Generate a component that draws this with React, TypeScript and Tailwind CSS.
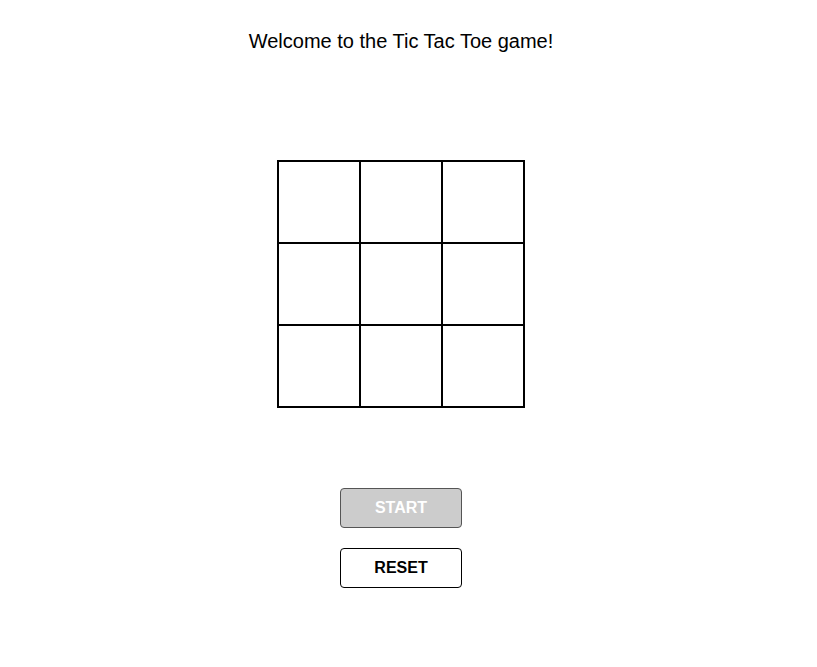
import { useState } from 'react';

const CELLS = Array.from({ length: 9 }, (_, i) => i);

export default function App() {
  const [board, setBoard] = useState<Array<string | null>>(Array(9).fill(null));
  const [started, setStarted] = useState(false);

  return (
    <div className="flex w-[802px] flex-col items-center bg-white font-['Liberation_Sans',Arial,sans-serif] text-black">
      <h1 className="mt-[30px] text-[20px] leading-[23px] font-normal">
        Welcome to the Tic Tac Toe game!
      </h1>

      <div className="mt-[107px] grid grid-cols-3 border border-black">
        {CELLS.map((i) => (
          <div
            key={i}
            className="flex h-[82px] w-[82px] items-center justify-center border border-black text-4xl"
            onClick={() => {
              if (!started || board[i]) return;
              const next = [...board];
              next[i] = board.filter(Boolean).length % 2 === 0 ? 'X' : 'O';
              setBoard(next);
            }}
          >
            {board[i]}
          </div>
        ))}
      </div>

      <div className="mt-[80px] flex flex-col gap-[20px]">
        <button
          disabled
          className="h-[40px] w-[122px] rounded-[4px] border border-[#555] bg-[#cccccc] text-[16px] font-bold text-white"
          onClick={() => setStarted(true)}
        >
          START
        </button>
        <button
          className="h-[40px] w-[122px] rounded-[4px] border border-black bg-white text-[16px] font-bold text-black"
          onClick={() => { setBoard(Array(9).fill(null)); setStarted(false); }}
        >
          RESET
        </button>
      </div>
    </div>
  );
}
